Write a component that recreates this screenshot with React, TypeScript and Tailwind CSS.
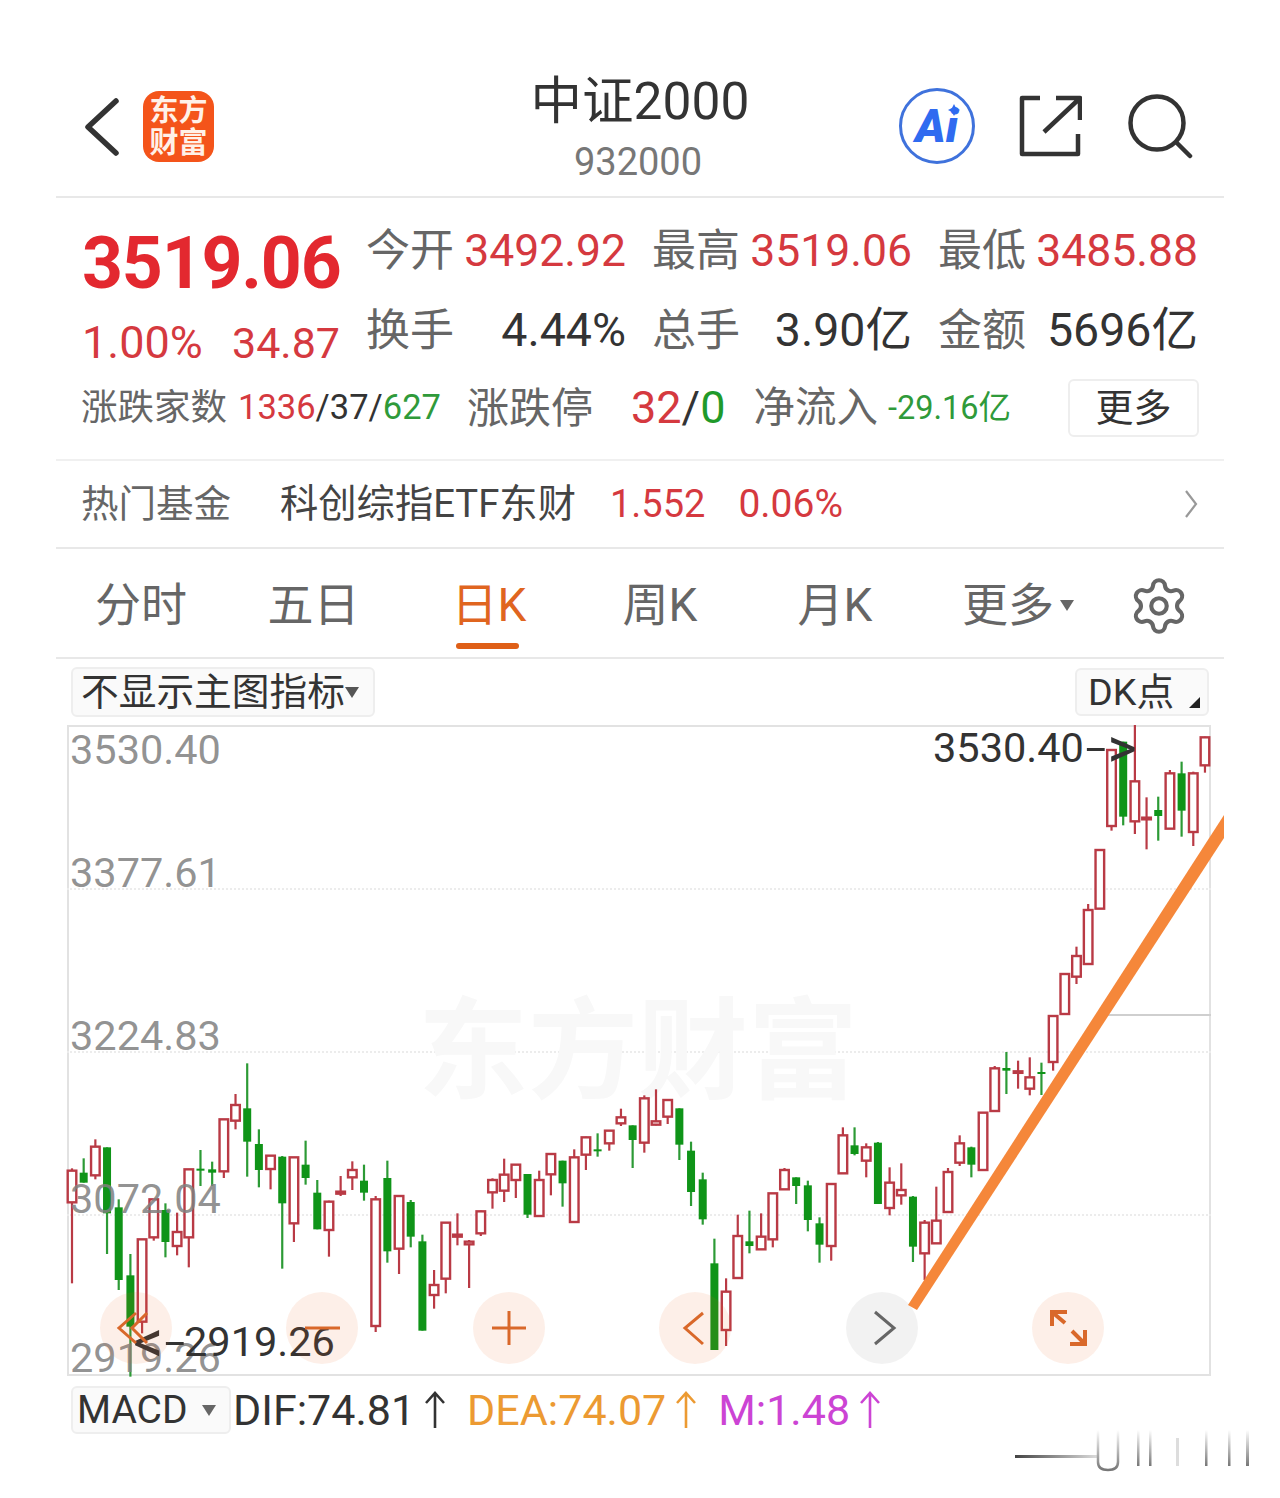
import { Settings } from "lucide-react";

type Candle = ["u" | "d", number, number, number, number];

// values are read as [kind, high, bodyTop, bodyBottom, low], grouped by y offset (scaled by 3)
const groups: { y: number; items: Candle[] }[] = [
  {
    y: 1040,
    items: [
      ["u", 385, 392, 487, 730], ["d", 355, 398, 428, 428], ["u", 298, 320, 406, 418], ["d", 322, 322, 520, 642],
      ["d", 478, 502, 720, 750], ["d", 642, 706, 860, 1010], ["u", 598, 598, 845, 880], ["u", 478, 478, 592, 602],
      ["d", 490, 510, 606, 652], ["u", 518, 576, 618, 646], ["u", 388, 388, 592, 682], ["d", 330, 386, 391, 438],
      ["d", 365, 388, 398, 438], ["u", 238, 238, 394, 414], ["u", 162, 195, 242, 268], ["d", 70, 205, 305, 410],
      ["d", 268, 312, 390, 442], ["u", 345, 347, 387, 448], ["d", 348, 350, 490, 686], ["u", 352, 352, 550, 606],
      ["d", 302, 374, 414, 434], ["d", 420, 458, 568, 568], ["u", 482, 485, 570, 650], ["u", 408, 455, 461, 468],
      ["u", 364, 390, 412, 450], ["d", 374, 422, 458, 482], ["u", 468, 478, 858, 876], ["d", 362, 414, 634, 668],
      ["u", 468, 468, 626, 702], ["d", 480, 486, 590, 622], ["d", 584, 604, 872, 872], ["u", 690, 735, 765, 806],
      ["u", 548, 548, 716, 760],
    ],
  },
  {
    y: 1060,
    items: [
      ["u", 460, 524, 530, 556], ["u", 540, 545, 553, 684], ["u", 452, 454, 520, 528], ["u", 355, 360, 397, 446],
      ["u", 296, 344, 392, 426], ["u", 314, 314, 360, 414], ["d", 342, 342, 464, 474], ["u", 332, 360, 468, 468],
      ["u", 282, 282, 343, 406], ["d", 302, 302, 370, 440], ["u", 268, 292, 486, 486], ["u", 230, 232, 284, 330],
      ["d", 220, 268, 272, 290], ["u", 210, 212, 250, 272], ["u", 146, 172, 190, 198], ["d", 196, 196, 240, 324],
      ["u", 106, 115, 248, 278], ["u", 88, 184, 194, 196], ["u", 118, 120, 170, 192], ["d", 145, 145, 254, 300],
      ["d", 245, 272, 396, 438], ["d", 338, 358, 478, 494], ["d", 536, 610, 870, 870], ["u", 655, 695, 810, 858],
      ["u", 464, 528, 654, 654], ["d", 452, 544, 558, 580], ["u", 460, 530, 568, 568], ["u", 400, 400, 538, 562],
      ["u", 324, 330, 388, 388], ["d", 352, 352, 378, 432], ["d", 362, 376, 480, 514], ["d", 472, 490, 554, 608],
      ["u", 372, 372, 558, 602],
    ],
  },
  {
    y: 1040,
    items: [
      ["u", 262, 286, 400, 400], ["d", 262, 316, 342, 346], ["u", 310, 322, 362, 412], ["d", 306, 308, 492, 492],
      ["u", 382, 428, 504, 526], ["u", 370, 450, 466, 494], ["d", 468, 470, 620, 666], ["u", 540, 548, 640, 720],
      ["u", 440, 542, 610, 610], ["u", 384, 396, 516, 516], ["u", 286, 310, 368, 378], ["d", 320, 322, 374, 412],
      ["u", 218, 218, 390, 390], ["u", 78, 85, 213, 216], ["d", 36, 84, 92, 162], ["u", 62, 94, 98, 146],
      ["u", 52, 112, 146, 166], ["d", 68, 96, 100, 165], ["u", -72, -72, 66, 92],
    ],
  },
  {
    y: 720,
    items: [
      ["u", 762, 762, 882, 882], ["u", 680, 708, 770, 792], ["u", 552, 570, 732, 732], ["u", 390, 390, 566, 566],
      ["u", 88, 90, 318, 332], ["d", 65, 65, 290, 316], ["u", 15, 184, 304, 342], ["u", 232, 293, 298, 388],
      ["d", 230, 270, 288, 362], ["u", 150, 160, 326, 326], ["d", 125, 160, 272, 350], ["u", 155, 160, 336, 378],
      ["u", 50, 52, 136, 158],
    ],
  },
];

const candles = groups.flatMap((g) =>
  g.items.map(([kind, hi, top, bot, lo]) => ({
    kind,
    hi: g.y + hi / 3,
    top: g.y + top / 3,
    bot: g.y + bot / 3,
    lo: g.y + lo / 3,
  }))
);

const axis = [
  { label: "3530.40", cls: "top-[1px]" },
  { label: "3377.61", cls: "top-[124px]" },
  { label: "3224.83", cls: "top-[287px]" },
  { label: "3072.04", cls: "top-[450px]" },
  { label: "2919.26", cls: "top-[609px]" },
];

const Chart = () => (
  <svg viewBox="67 725 1144 651" width="1144" height="651" className="absolute left-0 top-0 overflow-visible">
    {candles.map((c, i) => {
      const x = 72 + i * 11.68;
      const color = c.kind === "u" ? "#b93a45" : "#0f9418";
      return (
        <g key={i}>
          <line x1={x} x2={x} y1={c.hi} y2={c.lo} stroke={c.kind === "u" ? "#b93a45" : "#2c9a35"} strokeWidth="2.2" />
          {c.kind === "u" ? (
            <rect x={x - 4.3} y={c.top} width="8.6" height={Math.max(c.bot - c.top, 1.5)} fill="#fff" stroke={color} strokeWidth="2.4" />
          ) : (
            <rect x={x - 4} y={c.top} width="8" height={Math.max(c.bot - c.top, 2)} fill={color} />
          )}
        </g>
      );
    })}
  </svg>
);

const Arrow = ({ color }: { color: string }) => (
  <svg width="24" height="38" viewBox="0 0 24 38" fill="none" stroke={color} strokeWidth="2.6" className="mx-[8px] shrink-0">
    <path d="M12 37V2M3 12l9-10 9 10" />
  </svg>
);

const Round = ({ gray, thick, children }: { gray?: boolean; thick?: boolean; children: React.ReactNode }) => (
  <div className={`flex h-[72px] w-[72px] items-center justify-center rounded-full ${gray ? "bg-[#000]/5" : "bg-[#e8661a]/10"}`}>
    <svg width="44" height="44" viewBox="0 0 44 44" fill="none" stroke={gray ? "#666" : "#d9682a"} strokeWidth={thick ? 4 : 3}>
      {children}
    </svg>
  </div>
);

export default function App() {
  return (
    <div className="h-[1498px] w-[1280px] overflow-hidden bg-white px-[56px] font-['Roboto','Noto_Sans_CJK_SC',sans-serif] text-[#333]">
      {/* header */}
      <header className="grid h-[198px] grid-cols-3 items-start border-b-2 border-[#e8e8e8]">
        <div className="flex items-center pl-[28px] pt-[91px]">
          <svg width="36" height="60" viewBox="0 0 36 60" fill="none" stroke="#333" strokeWidth="5.5" strokeLinecap="round" strokeLinejoin="round">
            <path d="M32 4L4 30l28 26" />
          </svg>
          <div className="ml-[23px] flex h-[71px] w-[71px] flex-col items-center justify-center rounded-[16px] bg-[#f4541a] text-[29px] font-bold leading-[32px] text-[#fff1e8]">
            <span>东方</span>
            <span>财富</span>
          </div>
        </div>
        <div className="flex flex-col items-center pt-[71px]">
          <div className="text-[51.5px] leading-[62px] text-[#333]">中证2000</div>
          <div className="mr-[4px] mt-[3px] text-[38px] leading-[52px] text-[#777]">932000</div>
        </div>
        <div className="flex items-center pl-[64px] pt-[88px]">
          <div className="relative flex h-[76px] w-[76px] shrink-0 items-center justify-center rounded-full border-[3px] border-[#3f72dc]">
            <span className="text-[46px] font-black italic leading-none text-[#2f6bf0]">Ai</span>
            <svg width="12" height="12" viewBox="0 0 12 12" className="absolute left-[46px] top-[13px]">
              <path d="M6 0l2 4 4 2-4 2-2 4-2-4-4-2 4-2z" fill="#2f6bf0" />
            </svg>
          </div>
          <svg width="64" height="64" viewBox="0 0 64 64" fill="none" stroke="#333" strokeWidth="4.5" strokeLinejoin="round" className="ml-[43px] shrink-0">
            <path d="M22 4H4v56h56V40" />
            <path d="M38 4h24v22M60 6L26 38" />
          </svg>
          <svg width="66" height="66" viewBox="0 0 66 66" fill="none" stroke="#333" strokeWidth="4.5" strokeLinecap="round" className="ml-[45px] shrink-0">
            <circle cx="30" cy="30" r="26.5" />
            <path d="M50 50l13 13" />
          </svg>
        </div>
      </header>

      {/* quote */}
      <section className="h-[263px] border-b-2 border-[#f0f0f0] pt-[13px]">
        <div className="flex pl-[26px]">
          <div className="w-[286px]">
            <div className="flex h-[104px] items-center pt-[2px] text-[71.5px] font-bold tracking-[-1.2px] text-[#e3282f]">3519.06</div>
            <div className="flex h-[56px] w-[258px] items-center justify-between text-[43px] text-[#d5393f]">
              <span className="text-[45px]">1.00%</span>
              <span>34.87</span>
            </div>
          </div>
          <div className="grid w-[830px] grid-cols-[258px_258px_258px] gap-x-[28px]">
            {[
              ["今开", "3492.92", 1],
              ["最高", "3519.06", 1],
              ["最低", "3485.88", 1],
              ["换手", "4.44%", 0],
              ["总手", "3.90亿", 0],
              ["金额", "5696亿", 0],
            ].map(([label, value, red]) => (
              <div key={label as string} className="flex h-[80px] items-center justify-between">
                <span className="ml-[-2px] text-[44px] text-[#666]">{label}</span>
                <span className={red ? "text-[44.5px] text-[#d5393f]" : "text-[46.5px] text-[#333]"}>{value}</span>
              </div>
            ))}
          </div>
        </div>
        <div className="mt-[7px] flex h-[60px] items-center pl-[25px] pr-[25px]">
          <span className="w-[147px] whitespace-nowrap text-[36.5px] text-[#666]">涨跌家数</span>
          <span className="ml-[10px] w-[202px] whitespace-nowrap text-[34.5px]">
            <span className="text-[#d5393f]">1336</span>/37/<span className="text-[#2f9a3a]">627</span>
          </span>
          <span className="ml-[27px] text-[42px] text-[#666]">涨跌停</span>
          <span className="ml-[38px] text-[45px]">
            <span className="text-[#d5393f]">32</span>/<span className="text-[#1f9a2a]">0</span>
          </span>
          <span className="ml-[28px] text-[41.5px] text-[#666]">净流入</span>
          <span className="ml-[10px] text-[32.5px] text-[#2f9a3a]">-29.16亿</span>
          <span className="ml-auto flex h-[58px] w-[131px] items-center justify-center rounded-[6px] border-2 border-[#eeeeee] text-[38px] text-[#333]">更多</span>
        </div>
      </section>

      {/* fund */}
      <section className="flex h-[88px] items-center border-b-2 border-[#e8e8e8] pl-[25px] pr-[26px]">
        <span className="text-[37.5px] text-[#666]">热门基金</span>
        <span className="ml-[49px] text-[38.3px] text-[#444]">科创综指ETF东财</span>
        <span className="ml-[34px] text-[38px] text-[#d5393f]">1.552</span>
        <span className="ml-[33px] text-[39px] text-[#d5393f]">0.06%</span>
        <svg width="14" height="30" viewBox="0 0 14 30" fill="none" stroke="#999" strokeWidth="2.2" className="ml-auto">
          <path d="M2 2l10 13L2 28" />
        </svg>
      </section>

      {/* tabs */}
      <nav className="flex h-[110px] items-center border-b-2 border-[#e8e8e8] pt-[5px] text-[46px] text-[#666]">
        <div className="ml-[-1px] flex w-[172px] justify-center">分时</div>
        <div className="flex w-[173px] justify-center">五日</div>
        <div className="relative flex w-[178px] justify-center text-[#e0651f]">
          日K
          <span className="absolute left-[56px] top-[72px] h-[6px] w-[63px] rounded-full bg-[#df5f17]"></span>
        </div>
        <div className="flex w-[164px] justify-center">周K</div>
        <div className="flex w-[186px] justify-center">月K</div>
        <div className="flex w-[180px] items-center justify-center">
          更多
          <span className="ml-[6px] h-0 w-0 border-x-[7px] border-t-[11px] border-x-transparent border-t-[#666]"></span>
        </div>
        <Settings size={62} strokeWidth={1.6} color="#666" className="ml-[20px] shrink-0" />
      </nav>

      {/* chart toolbar */}
      <div className="flex h-[66px] items-center justify-between pl-[15px] pr-[15px]">
        <div className="flex h-[50px] w-[304px] items-center rounded-[6px] border-2 border-[#eeeeee] bg-[#fafafa] pl-[8px] text-[37.7px] text-[#333]">
          不显示主图指标
          <span className="h-0 w-0 border-x-[7px] border-t-[11px] border-x-transparent border-t-[#555]"></span>
        </div>
        <div className="relative flex h-[48px] w-[134px] items-center rounded-[6px] border-2 border-[#eeeeee] bg-[#fafafa] pl-[11px] text-[37.7px] text-[#333]">
          DK点
          <span className="absolute bottom-[6px] right-[7px] h-0 w-0 border-b-[11px] border-l-[11px] border-b-[#222] border-l-transparent"></span>
        </div>
      </div>

      {/* chart */}
      <div className="relative ml-[11px] h-[651px] w-[1144px] border-2 border-[#e2e2e2]">
        <div className="absolute -inset-[2px]">
          <div className="absolute inset-x-0 top-[163px] border-t-2 border-dotted border-[#ececec]"></div>
          <div className="absolute inset-x-0 top-[326px] border-t-2 border-dotted border-[#ececec]"></div>
          <div className="absolute inset-x-0 top-[489px] border-t-2 border-dotted border-[#ececec]"></div>
          <div className="absolute right-0 top-[289px] w-[110px] border-t-2 border-[#cfcfcf]"></div>
          <div className="absolute left-[351px] top-[263px] whitespace-nowrap text-[110px] font-bold leading-[130px] text-[#f8f8f8]">东方财富</div>
          <Chart />
          {axis.map((a) => (
            <span key={a.label} className={`absolute left-[3px] text-[41.5px] leading-[48px] text-[#808080]/85 ${a.cls}`}>
              {a.label}
            </span>
          ))}
          <span className="absolute left-[866px] top-[-1px] flex items-center whitespace-nowrap text-[41.5px] leading-[48px] text-[#333]">
            3530.40
            <span className="ml-[6px] mr-[6px] inline-block scale-x-[1.8]">-</span>
            <span className="text-[56px] leading-[48px]">&gt;</span>
          </span>
          <span className="absolute left-[66px] top-[593px] flex items-center whitespace-nowrap text-[41.5px] leading-[48px] text-[#333]">
            <span className="text-[60px] leading-[48px]">&lt;</span>
            <span className="ml-[5px] mr-[4px] inline-block scale-x-[1.8]">-</span>
            2919.26
          </span>
          <div className="absolute left-[33px] top-[567px] flex w-[1004px] justify-between">
            <Round>
              <path d="M22 7L5 22l17 15M33 7L18 22l15 15" />
            </Round>
            <Round>
              <path d="M5 22h35" />
            </Round>
            <Round>
              <path d="M22 5v34M5 22h34" />
            </Round>
            <Round>
              <path d="M30 7L12 22l18 16" />
            </Round>
            <Round gray>
              <path d="M15 6l19 16-19 16" />
            </Round>
            <Round thick>
              <path d="M6 20V6h15M6 6l13 11M39 24v14H24M39 38L26 25" />
            </Round>
          </div>
          <svg viewBox="67 725 1144 651" width="1144" height="651" className="absolute left-0 top-0 overflow-visible">
            <polygon points="908,1305 917,1310 1224,838 1224,815" fill="#f5873a" />
          </svg>
        </div>
      </div>

      {/* macd */}
      <div className="ml-[15px] mt-[10px] flex h-[48px] items-center text-[43px]">
        <div className="flex h-[48px] w-[160px] shrink-0 items-center rounded-[6px] border-2 border-[#eeeeee] bg-[#fafafa] pl-[4px] text-[39px] text-[#333]">
          MACD
          <span className="ml-[14px] h-0 w-0 border-x-[7px] border-t-[11px] border-x-transparent border-t-[#666]"></span>
        </div>
        <span className="ml-[2px] text-[#333]">DIF:74.81</span>
        <Arrow color="#333" />
        <span className="ml-[12px] text-[#ec9a32]">DEA:74.07</span>
        <Arrow color="#ec9a32" />
        <span className="ml-[12px] text-[#cc44d4]">M:1.48</span>
        <Arrow color="#cc44d4" />
      </div>

      {/* bottom corner mark */}
      <div className="flex justify-end">
        <svg width="240" height="44" viewBox="0 0 240 44" className="mr-[-26px] mt-[-4px]">
          <defs>
            <linearGradient id="dash" x1="0" x2="1" y1="0" y2="0">
              <stop offset="0" stopColor="#444" />
              <stop offset="1" stopColor="#ddd" />
            </linearGradient>
            <linearGradient id="bar" x1="0" x2="0" y1="0" y2="1">
              <stop offset="0" stopColor="#fff" />
              <stop offset="1" stopColor="#777" />
            </linearGradient>
          </defs>
          <rect x="5" y="25" width="83" height="3" fill="url(#dash)" />
          <path d="M88 0v32q0 8 10 8t10-8V0" fill="none" stroke="url(#bar)" strokeWidth="2.5" />
          <rect x="127" y="0" width="2.5" height="36" fill="url(#bar)" />
          <rect x="139" y="0" width="2.5" height="36" fill="url(#bar)" />
          <rect x="166" y="8" width="3" height="28" fill="#ddd" />
          <rect x="195" y="0" width="2.5" height="36" fill="url(#bar)" />
          <rect x="218" y="0" width="2.5" height="36" fill="url(#bar)" />
          <rect x="236" y="0" width="3" height="36" fill="url(#bar)" />
        </svg>
      </div>
    </div>
  );
}
